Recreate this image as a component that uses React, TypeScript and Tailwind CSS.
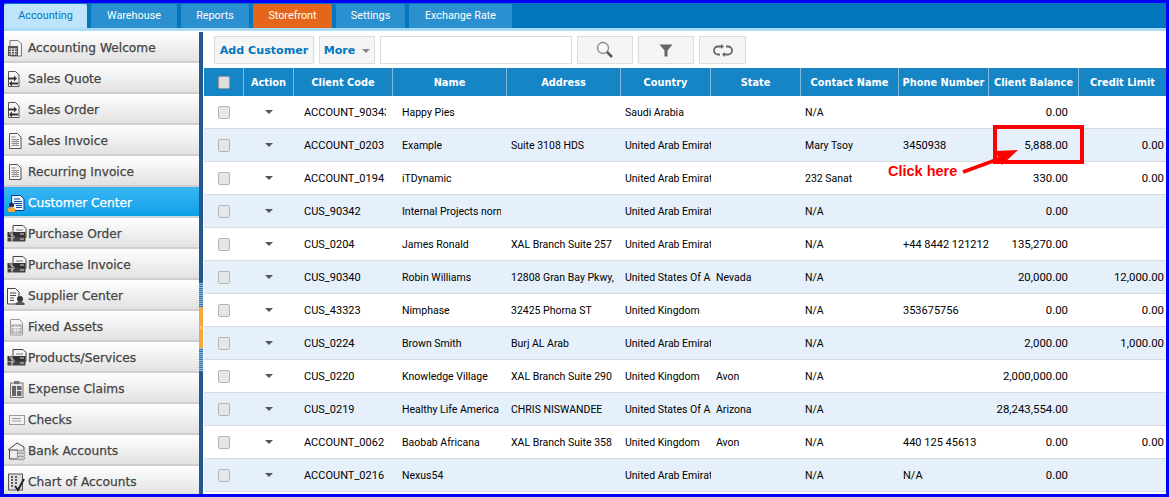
import { ReactNode } from 'react'

const tabs = [
  { label: 'Warehouse', cls: 'w-[86px] bg-[#2a90cf]' },
  { label: 'Reports', cls: 'w-[68px] bg-[#2a90cf]' },
  { label: 'Storefront', cls: 'w-[79px] bg-[#e5651a]' },
  { label: 'Settings', cls: 'w-[69px] bg-[#2a90cf]' },
  { label: 'Exchange Rate', cls: 'w-[103px] bg-[#2a90cf]' },
]

const menu: { label: string; icon: string; active?: boolean }[] = [
  { label: 'Accounting Welcome', icon: 'calc' },
  { label: 'Sales Quote', icon: 'swap' },
  { label: 'Sales Order', icon: 'swap' },
  { label: 'Sales Invoice', icon: 'sheet' },
  { label: 'Recurring Invoice', icon: 'sheet' },
  { label: 'Customer Center', icon: 'customer', active: true },
  { label: 'Purchase Order', icon: 'money' },
  { label: 'Purchase Invoice', icon: 'money' },
  { label: 'Supplier Center', icon: 'supplier' },
  { label: 'Fixed Assets', icon: 'assets' },
  { label: 'Products/Services', icon: 'money' },
  { label: 'Expense Claims', icon: 'clip' },
  { label: 'Checks', icon: 'check' },
  { label: 'Bank Accounts', icon: 'bank' },
  { label: 'Chart of Accounts', icon: 'chart' },
]

const headers = ['Action', 'Client Code', 'Name', 'Address', 'Country', 'State', 'Contact Name', 'Phone Number', 'Client Balance', 'Credit Limit']

const rows = [
  ['ACCOUNT_90343', 'Happy Pies', '', 'Saudi Arabia', '', 'N/A', '', '0.00', ''],
  ['ACCOUNT_0203', 'Example', 'Suite 3108 HDS', 'United Arab Emirates', '', 'Mary Tsoy', '3450938', '5,888.00', '0.00'],
  ['ACCOUNT_0194', 'iTDynamic', '', 'United Arab Emirates', '', '232 Sanat', '', '330.00', '0.00'],
  ['CUS_90342', 'Internal Projects normal', '', 'United Arab Emirates', '', 'N/A', '', '0.00', ''],
  ['CUS_0204', 'James Ronald', 'XAL Branch Suite 257', 'United Arab Emirates', '', 'N/A', '+44 8442 121212', '135,270.00', ''],
  ['CUS_90340', 'Robin Williams', '12808 Gran Bay Pkwy,', 'United States Of America', 'Nevada', 'N/A', '', '20,000.00', '12,000.00'],
  ['CUS_43323', 'Nimphase', '32425 Phorna ST', 'United Kingdom', '', 'N/A', '353675756', '0.00', '0.00'],
  ['CUS_0224', 'Brown Smith', 'Burj AL Arab', 'United Arab Emirates', '', 'N/A', '', '2,000.00', '1,000.00'],
  ['CUS_0220', 'Knowledge Village', 'XAL Branch Suite 290', 'United Kingdom', 'Avon', 'N/A', '', '2,000,000.00', ''],
  ['CUS_0219', 'Healthy Life America', 'CHRIS NISWANDEE', 'United States Of America', 'Arizona', 'N/A', '', '28,243,554.00', ''],
  ['ACCOUNT_0062', 'Baobab Africana', 'XAL Branch Suite 358', 'United Kingdom', 'Avon', 'N/A', '440 125 45613', '0.00', '0.00'],
  ['ACCOUNT_0216', 'Nexus54', '', 'United Arab Emirates', '', 'N/A', 'N/A', '0.00', ''],
]

const gridCols = 'grid grid-cols-[40px_50px_99px_114px_114px_90px_90px_98px_90px_90px_87px]'
const cell = 'flex items-center pt-[2px] whitespace-nowrap overflow-hidden'

function MenuIcon({ kind }: { kind: string }) {
  const doc = <path d="M2.5 1.5h8l3.5 3.5v11.5h-11.5z" fill="#f6f6f6" stroke="#555" />
  let inner: ReactNode = null
  if (kind === 'calc') {
    inner = (
      <>
        <path d="M3 1.5h8l3.5 3.5v12h-11.5z" fill="#f2f2f2" stroke="#777" />
        <rect x="1" y="7" width="10" height="10" fill="#555" />
        <path d="M2 10h8M2 12.5h8M2 15h8M4.5 9v7M7.5 9v7" stroke="#ddd" />
      </>
    )
  } else if (kind === 'swap') {
    inner = (
      <>
        <path d="M1.5 1.5h7l3.5 3.5v11.500h-10.500z" fill="#f6f6f6" stroke="#555" />
        <path d="M1 7.500h6V5.500l3 3-3 3V9.500H1z" fill="#333" />
        <path d="M11 12.500H5v-2l-3 3 3 3v-2h6z" fill="#333" />
      </>
    )
  } else if (kind === 'sheet') {
    inner = (
      <>
        {doc}
        <path d="M4.500 5h4M4.500 7.500h7.500M4.500 9.500h7.500M4.500 11.500h7.500M4.500 13.500h7.500" stroke="#888" />
        <path d="M7 7v7M9.500 7v7" stroke="#aaa" />
      </>
    )
  } else if (kind === 'customer') {
    inner = (
      <>
        <path d="M4.500 1.500h9l3.500 3.500v11.500h-12.500z" fill="#e7f1fb" stroke="#123f8c" />
        <path d="M7 5h6M7 7.500h8M7 9.500h8M9 11.500h6M9 13.500h6" stroke="#1a4d9e" />
        <circle cx="4.500" cy="11" r="2.500" fill="#1c2b55" />
        <path d="M1 18v-3.500l3.500-2 3.500 2V18z" fill="#f0a93a" />
      </>
    )
  } else if (kind === 'money') {
    inner = (
      <>
        <path d="M6 0.500h10l3 3v9h-13z" fill="#f5f5f5" stroke="#444" />
        <path d="M9 5h7M9 8h7" stroke="#777" />
        <rect x="0.500" y="7" width="18" height="5" fill="#333" />
        <rect x="0.500" y="12.500" width="18" height="4" fill="#444" />
        <path d="M5 6.500c-3 0-3 3 0 3.500s3 4-1 4M5 5v12" stroke="#ccc" fill="none" />
        <path d="M13 9h4M13 14h4" stroke="#ddd" />
      </>
    )
  } else if (kind === 'supplier') {
    inner = (
      <>
        <path d="M0.500 1.500h8l3.500 3.500v12h-11.500z" fill="#f8f8f8" stroke="#444" />
        <path d="M3 6h6M3 8.500h6M3 11h4M3 13.500h4" stroke="#444" />
        <circle cx="13" cy="12" r="3" fill="#333" />
        <path d="M8.500 18v-2l4.500-2 4.500 2v2z" fill="#555" />
      </>
    )
  } else if (kind === 'assets') {
    inner = (
      <>
        <path d="M3.500 1.500h9l3 3v12.500h-12z" fill="#f4f4f4" stroke="#999" />
        <rect x="5" y="7" width="9" height="8" fill="#bbb" stroke="#999" />
        <path d="M5 9.500h9M5 12h9M8 7v8M11 7v8" stroke="#eee" />
      </>
    )
  } else if (kind === 'clip') {
    inner = (
      <>
        <rect x="3.500" y="3" width="12.500" height="14.500" fill="#e8e8e8" stroke="#777" />
        <rect x="7" y="1" width="5.500" height="3" fill="#777" />
        <rect x="5" y="6" width="4" height="10" fill="#666" />
        <rect x="10" y="6" width="4.500" height="4" fill="#666" />
        <rect x="10" y="11" width="4.500" height="5" fill="#666" />
      </>
    )
  } else if (kind === 'check') {
    inner = (
      <>
        <rect x="2.500" y="4.500" width="15" height="9" fill="#f2f2f2" stroke="#999" />
        <path d="M5 7.500h9M5 10h9" stroke="#999" />
      </>
    )
  } else if (kind === 'bank') {
    inner = (
      <>
        <path d="M1 8l9-7 7 4v3" fill="#f2f2f2" stroke="#444" />
        <path d="M2.500 8v9h8V8z" fill="#eee" stroke="#444" />
        <ellipse cx="14" cy="10" rx="4" ry="2" fill="#ccc" stroke="#999" />
        <ellipse cx="14" cy="13" rx="4" ry="2" fill="#ddd" stroke="#999" />
        <ellipse cx="14" cy="16" rx="4" ry="2" fill="#ccc" stroke="#999" />
      </>
    )
  } else {
    inner = (
      <>
        <rect x="1.500" y="1" width="14" height="16" fill="#ddd" stroke="#555" />
        <path d="M4 4h2M8 4h2M4 7h2M8 7h2M4 10h2M8 10h2M4 13h2" stroke="#333" strokeWidth="1.500" />
        <path d="M8 13l3 4 6-11" stroke="#222" strokeWidth="2" fill="none" />
      </>
    )
  }
  return (
    <svg width="20" height="19" viewBox="0 0 20 19" className="shrink-0">
      {inner}
    </svg>
  )
}

function ToolButton({ className, children }: { className: string; children: ReactNode }) {
  return <div className={`h-[28px] flex items-center justify-center whitespace-nowrap bg-[#f5f5f5] border border-[#dcdcdc] ${className}`}>{children}</div>
}

function Checkbox() {
  return <div className="w-[12px] h-[13px] rounded-[2px] bg-[#e6e6e6] border border-[#b5b5b5]" />
}

function Caret({ color = '#555' }: { color?: string }) {
  return (
    <svg width="8" height="4" viewBox="0 0 8 4">
      <path d="M0 0h8L4 4z" fill={color} />
    </svg>
  )
}

export default function App() {
  return (
    <div className="relative w-[1169px] h-[497px] overflow-hidden bg-white border-t-[3px] border-l-[4px] border-r-[3px] border-b-[3px] border-[#0000ff] font-['Roboto',sans-serif]">
      {/* tab bar */}
      <div className="h-[25px] pt-[1px] flex gap-[4px] bg-[#0277bd]">
        <div className="w-[83px] flex items-center justify-center rounded-t-[2px] bg-[#bde4fa] text-[#0277bd] text-[10.8px]">Accounting</div>
        {tabs.map((t) => (
          <div key={t.label} className={`flex items-center justify-center rounded-t-[2px] text-white text-[10.8px] ${t.cls}`}>{t.label}</div>
        ))}
      </div>
      <div className="h-[4px] border-t-[3px] border-[#a9dbf7] bg-white" />

      <div className="flex h-[462px]">
        {/* sidebar */}
        <div className="w-[195px] shrink-0 overflow-hidden font-['DejaVu_Sans',sans-serif]">
          {menu.map((m) => (
            <div
              key={m.label}
              className={`h-[31px] pt-[4px] flex items-center gap-[1px] pl-[3px] border-b-[2px] ${
                m.active
                  ? 'bg-gradient-to-b from-[#38b6f3] to-[#08a0e8] border-[#c8d6dd] text-white'
                  : 'bg-gradient-to-b from-white to-[#e2e2e2] border-[#d3cdcd] text-[#444]'
              } text-[12.2px] [-webkit-text-stroke:0.25px_currentColor]`}
            >
              <MenuIcon kind={m.icon} />
              <span className="whitespace-nowrap">{m.label}</span>
            </div>
          ))}
        </div>

        {/* splitter */}
        <div className="w-[4px] shrink-0 flex flex-col bg-[#20588f]">
          <div className="h-[251px]" />
          <div className="h-[24px] bg-[repeating-linear-gradient(to_bottom,#8fc0e6_0,#8fc0e6_1px,#2f6fa8_1px,#2f6fa8_2px)]" />
          <div className="h-[41px] bg-[#f5a83c] flex items-center justify-center text-white text-[8px] leading-none">‹</div>
          <div className="h-[24px] bg-[repeating-linear-gradient(to_bottom,#8fc0e6_0,#8fc0e6_1px,#2f6fa8_1px,#2f6fa8_2px)]" />
        </div>

        {/* main */}
        <div className="flex-1 min-w-0 pl-[1px]">
          <div className="h-[36px] pt-[4px] pl-[10px] flex gap-[5px] font-['DejaVu_Sans',sans-serif]">
            <ToolButton className="w-[100px] pt-[2px] text-[#0277bd] text-[11.1px] font-bold">Add Customer</ToolButton>
            <ToolButton className="w-[56px] pt-[2px] gap-[7px] text-[#0277bd] text-[11.1px] font-bold">
              More <Caret color="#888" />
            </ToolButton>
            <div className="w-[192px] h-[28px] bg-white border border-[#dcdcdc]" />
            <ToolButton className="w-[56px]">
              <svg width="18" height="18" viewBox="0 0 18 18">
                <circle cx="7" cy="7" r="5.500" fill="#f8f8f8" stroke="#8a8a8a" strokeWidth="1.300" />
                <path d="M11 11l5 5" stroke="#555" strokeWidth="2.500" />
              </svg>
            </ToolButton>
            <ToolButton className="w-[56px]">
              <svg width="14" height="13" viewBox="0 0 14 13">
                <path d="M0.500 0.500h13L8.500 6.500v6h-3v-6z" fill="#666" />
              </svg>
            </ToolButton>
            <ToolButton className="w-[47px]">
              <svg width="20" height="13" viewBox="0 0 20 13" fill="none" stroke="#666" strokeWidth="1.800">
                <path d="M8 2.500H5a4 4 0 0 0 0 8h2M12 10.500h3a4 4 0 0 0 0-8h-2" />
                <path d="M8 0l3 2.500L8 5zM12 8l-3 2.500 3 2.500z" fill="#666" stroke="none" />
              </svg>
            </ToolButton>
          </div>

          {/* table head */}
          <div className={`${gridCols} h-[28px] bg-[#1585c5] text-white text-[9.8px] font-bold font-['DejaVu_Sans',sans-serif]`}>
            <div className="flex items-center pl-[14px] border-r border-[#7fbde0]">
              <div className="w-[12px] h-[13px] rounded-[2px] bg-[#dcdcdc] border border-[#9a9a9a]" />
            </div>
            {headers.map((h, i) => (
              <div key={h} className={`flex items-center justify-center pt-[2px] whitespace-nowrap overflow-hidden ${i < headers.length - 1 ? 'border-r border-[#7fbde0]' : ''}`}>{h}</div>
            ))}
          </div>

          {/* table rows */}
          {rows.map((r, i) => (
            <div key={r[0]} className={`${gridCols} h-[33px] border-b border-[#d8dce2] text-[10.5px] text-black ${i % 2 ? 'bg-[#e6f0fb]' : 'bg-white'}`}>
              <div className="flex items-center pl-[14px]"><Checkbox /></div>
              <div className="flex items-center justify-center"><Caret /></div>
              <div className={`${cell} pl-[10px] text-[11px]`}><span className="block w-[82px] overflow-hidden">{r[0]}</span></div>
              <div className={`${cell} pl-[9px]`}><span className="block w-[99px] overflow-hidden">{r[1]}</span></div>
              <div className={`${cell} pl-[4px]`}>{r[2]}</div>
              <div className={`${cell} pl-[4px]`}>{r[3]}</div>
              <div className={`${cell} pl-[5px]`}>{r[4]}</div>
              <div className={`${cell} pl-[4px]`}>{r[5]}</div>
              <div className={`${cell} pl-[4px] text-[11px]`}>{r[6]}</div>
              <div className="flex items-center justify-end pt-[2px] pr-[11px] text-[11.4px] whitespace-nowrap">{r[7]}</div>
              <div className="flex items-center justify-end pt-[2px] pr-[2px] text-[11.4px] whitespace-nowrap">{r[8]}</div>
            </div>
          ))}
        </div>
      </div>

      {/* annotation over the table */}
      <div className="absolute left-[989px] top-[122px] w-[91px] h-[39px] border-[4px] border-[#ff0000]" />
      <div className="absolute left-[884px] top-[158px] text-[#ff0000] text-[14.5px] font-bold font-['Liberation_Sans',sans-serif] whitespace-nowrap">Click here</div>
      <svg className="absolute left-[955px] top-[142px]" width="65" height="32" viewBox="0 0 65 32">
        <path d="M4 27L45 12" stroke="#ff0000" strokeWidth="3.500" />
        <path d="M59 5L36 6l7 14z" fill="#ff0000" />
      </svg>
    </div>
  )
}
